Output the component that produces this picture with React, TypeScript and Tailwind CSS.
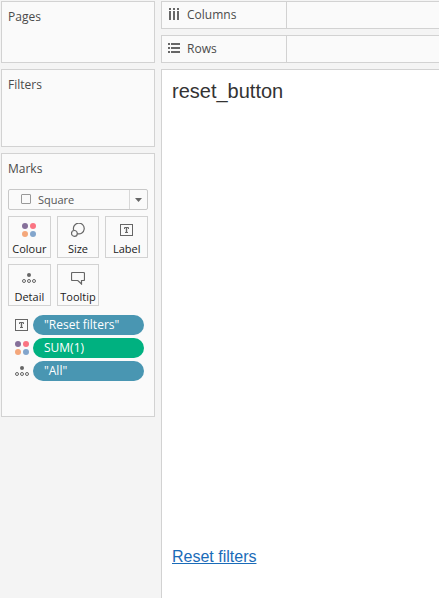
import type { ReactNode } from 'react';

const panel = 'border border-[#d2d2d2] bg-[#fafafa]';

function ColourIcon() {
  return (
    <svg width="14" height="14" viewBox="0 0 14 14" aria-hidden="true" className="shrink-0">
      <circle cx="3" cy="3" r="3" fill="#86709a" />
      <circle cx="11" cy="3" r="3" fill="#fa7482" />
      <circle cx="3" cy="11" r="3" fill="#f4a77b" />
      <circle cx="11" cy="11" r="3" fill="#82a5cc" />
    </svg>
  );
}

function SizeIcon() {
  return (
    <svg width="14" height="14" viewBox="0 0 14 14" fill="none" stroke="#666" aria-hidden="true" className="shrink-0">
      <path d="M2.7 7.2A5.4 5.4 0 1 1 6.3 10.7" strokeWidth="1.2" />
      <circle cx="3.4" cy="10.4" r="2.9" strokeWidth="1.2" />
    </svg>
  );
}

function LabelIcon() {
  return (
    <svg width="14" height="14" viewBox="0 0 14 14" fill="none" stroke="#666" aria-hidden="true" className="shrink-0">
      <rect x=".5" y="1.5" width="12" height="11" />
      <path d="M4.5 6V4.5H8.5V6M5 9.5H8" />
      <path d="M6.5 4.5V9.5" strokeWidth="1.4" />
    </svg>
  );
}

function DetailIcon() {
  return (
    <svg width="14" height="14" viewBox="0 0 14 14" fill="none" stroke="#666" aria-hidden="true" className="shrink-0">
      <circle cx="7" cy="4" r="2" fill="#666" stroke="none" />
      <circle cx="2" cy="10" r="1.5" />
      <circle cx="7" cy="10" r="1.5" />
      <circle cx="12" cy="10" r="1.5" />
    </svg>
  );
}

function TooltipIcon() {
  return (
    <svg width="14" height="14" viewBox="0 0 14 14" fill="none" stroke="#666" aria-hidden="true" className="shrink-0">
      <path d="M1.5 1.5H12.5Q13.5 1.5 13.5 2.5V8.5Q13.5 9.5 12.5 9.5H10.5V13L6.8 9.5H1.5Q.5 9.5 .5 8.5V2.5Q.5 1.5 1.5 1.5Z" strokeWidth="1.2" />
    </svg>
  );
}

function ColumnsIcon() {
  return (
    <svg width="12" height="14" viewBox="0 0 12 14" fill="#666" aria-hidden="true" className="shrink-0">
      <path d="M1 0h2v2H1zM5 0h2v2H5zM9 0h2v2H9zM1 3h2v9H1zM5 3h2v9H5zM9 3h2v9H9z" />
    </svg>
  );
}

function RowsIcon() {
  return (
    <svg width="12" height="12" viewBox="0 0 12 12" fill="#666" aria-hidden="true" className="shrink-0">
      <path d="M0 0h2v2H0zM0 4h2v2H0zM0 8h2v2H0zM3 0h9v2H3zM3 4h9v2H3zM3 8h9v2H3z" />
    </svg>
  );
}

function Shelf({ icon, name }: { icon: ReactNode; name: string }) {
  return (
    <section className={`flex h-7 border-r-0 ${panel}`}>
      <h2 className="flex w-[125px] shrink-0 items-center gap-[7px] border-r border-[#d2d2d2] pl-1.5">
        {icon}
        {name}
      </h2>
    </section>
  );
}

const cards = [
  { name: 'Colour', icon: <ColourIcon /> },
  { name: 'Size', icon: <SizeIcon /> },
  { name: 'Label', icon: <LabelIcon /> },
  { name: 'Detail', icon: <DetailIcon /> },
  { name: 'Tooltip', icon: <TooltipIcon /> },
];

const pills = [
  { name: '"Reset filters"', icon: <LabelIcon />, fill: 'bg-[#4996b2]' },
  { name: 'SUM(1)', icon: <ColourIcon />, fill: 'bg-[#00b180]' },
  { name: '"All"', icon: <DetailIcon />, fill: 'bg-[#4996b2]' },
];

export default function App() {
  return (
    <div className="flex min-h-screen gap-1.5 bg-[#f4f4f4] pt-px pl-px font-['Open_Sans',sans-serif] text-xs text-[#4b4b4b]">
      <aside className="flex w-[154px] shrink-0 flex-col gap-1.5">
        <section className={`h-[62px] px-1.5 pt-[7px] ${panel}`}>
          <h2>Pages</h2>
        </section>
        <section className={`h-[78px] px-1.5 pt-[7px] ${panel}`}>
          <h2>Filters</h2>
        </section>
        <section className={`px-1.5 pt-[7px] pb-[35px] ${panel}`}>
          <h2>Marks</h2>
          <div className="relative mt-3 flex h-[21px] rounded-xs border border-[#c8c8c8]">
            <select aria-label="Mark type" className="w-full appearance-none pt-px pl-[29px] text-[11px] text-[#555]">
              <option>Square</option>
              <option>Circle</option>
              <option>Line</option>
            </select>
            <span className="pointer-events-none absolute top-1 left-3 size-2.5 rounded-[1px] border border-[#999]" />
            <span className="pointer-events-none absolute inset-y-0 right-0 flex w-[18px] items-center justify-center border-l border-[#d8d8d8]">
              <svg width="7" height="4" viewBox="0 0 7 4" fill="#666" aria-hidden="true">
                <path d="M0 0h7L3.5 4z" />
              </svg>
            </span>
          </div>
          <div className="mt-1.5 grid grid-cols-3 gap-1.5">
            {cards.map((card) => (
              <button
                key={card.name}
                type="button"
                className="flex h-[42px] flex-col items-center justify-between border border-[#d2d2d2] pt-1.5 text-[11px] leading-4 text-[#222]"
              >
                {card.icon}
                <span>{card.name}</span>
              </button>
            ))}
          </div>
          <ul className="mt-[9px] flex flex-col gap-[3px] pr-1 pl-[7px]">
            {pills.map((pill) => (
              <li key={pill.name} className="flex items-center gap-1">
                {pill.icon}
                <button
                  type="button"
                  className={`h-5 flex-1 rounded-full pl-[11px] text-left font-medium text-white ${pill.fill}`}
                >
                  {pill.name}
                </button>
              </li>
            ))}
          </ul>
        </section>
      </aside>
      <main className="flex min-w-0 flex-1 flex-col gap-1.5">
        <Shelf icon={<ColumnsIcon />} name="Columns" />
        <Shelf icon={<RowsIcon />} name="Rows" />
        <section className="flex flex-1 flex-col items-start justify-between border-t border-l border-[#d2d2d2] bg-white px-2.5 pt-[7px] pb-[29px] font-['Liberation_Sans',Arial,sans-serif]">
          <h1 className="text-xl leading-7 text-[#333]">reset_button</h1>
          <a href="#reset" className="text-base text-[#1a6bb8] underline">
            Reset filters
          </a>
        </section>
      </main>
    </div>
  );
}
